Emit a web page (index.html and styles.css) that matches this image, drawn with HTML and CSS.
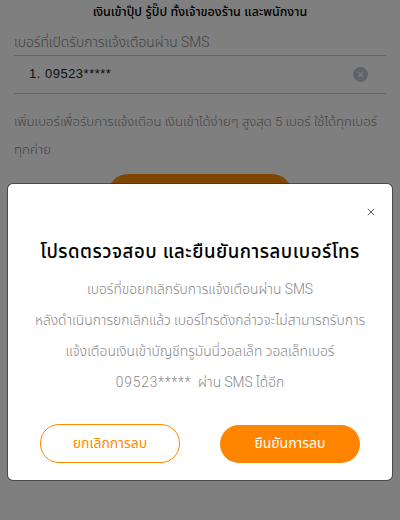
FILE: index.html
```html
<!DOCTYPE html>
<html lang="th">
<head>
<meta charset="utf-8">
<title>SMS</title>
<link rel="stylesheet" href="styles.css">
</head>
<body>
<main class="page">
  <h1 class="page-title">เงินเข้าปุ๊ป รู้ปั๊ป ทั้งเจ้าของร้าน และพนักงาน</h1>
  <p class="section-label">เบอร์ที่เปิดรับการแจ้งเตือนผ่าน SMS</p>
  <div class="number-row">
    <span class="number">1. 09523*****</span>
    <svg class="remove-icon" viewBox="0 0 16 16" width="15" height="15" aria-hidden="true">
      <circle cx="8" cy="8" r="8" fill="#c1c8d4"/>
      <path d="M5.4 5.4l5.2 5.2M10.6 5.4l-5.2 5.2" stroke="#eef0f4" stroke-width="1.6" fill="none"/>
    </svg>
  </div>
  <p class="hint">เพิ่มเบอร์เพื่อรับการแจ้งเตือน เงินเข้าได้ง่ายๆ สูงสุด 5 เบอร์ ใช้ได้ทุกเบอร์ ทุกค่าย</p>
  <div class="add-button"></div>
</main>
<div class="overlay">
  <section class="modal">
    <div class="close-row">
      <svg viewBox="0 0 10 10" width="8" height="8" aria-hidden="true">
        <path d="M1 1l8 8M9 1l-8 8" stroke="#444" stroke-width="1.1" fill="none"/>
      </svg>
    </div>
    <h2 class="modal-title">โปรดตรวจสอบ และยืนยันการลบเบอร์โทร</h2>
    <div class="modal-body">
      <p>เบอร์ที่ขอยกเลิกรับการแจ้งเตือนผ่าน SMS</p>
      <p>หลังดำเนินการยกเลิกแล้ว เบอร์โทรดังกล่าวจะไม่สามารถรับการ</p>
      <p>แจ้งเตือนเงินเข้าบัญชีทรูมันนี่วอลเล็ท วอลเล็ทเบอร์</p>
      <p><span class="masked">09523*****</span>&nbsp; ผ่าน SMS ได้อีก</p>
    </div>
    <div class="actions">
      <button class="btn btn-outline">ยกเลิกการลบ</button>
      <button class="btn btn-solid">ยืนยันการลบ</button>
    </div>
  </section>
</div>
</body>
</html>
```
FILE: styles.css
```css
* { box-sizing: border-box; }
html, body { margin: 0; height: 520px; overflow: hidden; }
body {
  background: #fff;
  font-family: "Liberation Sans", "Noto Sans Thai", "Noto Sans", "DejaVu Sans", sans-serif;
  color: #000;
}
.page { padding: 0 14px; }
.page-title {
  margin: 0;
  height: 26px;
  line-height: 25px;
  text-align: center;
  font-size: 12.5px;
  font-weight: 500;
}
.section-label {
  margin: 0;
  height: 29px;
  padding-top: 2px;
  line-height: 28px;
  font-family: Roboto, "Noto Sans Thai", "Noto Sans", sans-serif;
  font-size: 13.8px;
  font-weight: 300;
  color: #888;
}
.number-row {
  height: 39px;
  display: flex;
  align-items: center;
  justify-content: space-between;
  padding: 0 18px 0 15px;
  border-top: 1px solid #ccc;
  border-bottom: 1px solid #ccc;
}
.number { font-size: 13px; letter-spacing: .5px; color: #222; margin-top: -2px; }
.hint {
  margin: 14px 0 0;
  line-height: 28px;
  font-family: Roboto, "Noto Sans Thai", "Noto Sans", sans-serif;
  font-size: 13.2px;
  font-weight: 300;
  color: #888;
}
.add-button {
  width: 184px;
  height: 40px;
  margin: 10px auto 0;
  border-radius: 20px;
  background: #ff8c00;
}
.overlay {
  position: absolute;
  inset: 0;
  background: rgba(0, 0, 0, .5);
  padding: 184px 8px 0;
}
.modal {
  height: 296px;
  background: #fff;
  border-radius: 5px;
  padding: 0 32px;
  display: flex;
  flex-direction: column;
  box-shadow: 0 0 0 1px rgba(40, 40, 40, .6);
}
.close-row {
  display: flex;
  justify-content: flex-end;
  margin: 24px -15px 0 0;
  height: 8px;
}
.modal-title {
  margin: 21px -10px 0;
  text-align: center;
  font-size: 18.6px;
  line-height: 30px;
  font-weight: 500;
  letter-spacing: .5px;
  white-space: nowrap;
}
.modal-body {
  margin: 7px -10px 0;
  text-align: center;
  color: #888;
  font-family: Roboto, "Noto Sans Thai", "Noto Sans", sans-serif;
  font-size: 13.8px;
  font-weight: 300;
}
.modal-body p { margin: 0; height: 31px; line-height: 31px; white-space: nowrap; }
.masked { letter-spacing: .8px; }
.actions { margin-top: 26px; display: flex; justify-content: space-between; align-items: center; }
.btn {
  width: 140px;
  height: 38px;
  border-radius: 19px;
  font: inherit;
  font-size: 14px;
  font-weight: 400;
  padding: 0;
}
.btn-outline { background: #fff; color: #ff8a00; border: 1px solid #ff8a00; height: 39px; }
.btn-solid { background: #ff8400; color: #fff; border: 0; }
```
